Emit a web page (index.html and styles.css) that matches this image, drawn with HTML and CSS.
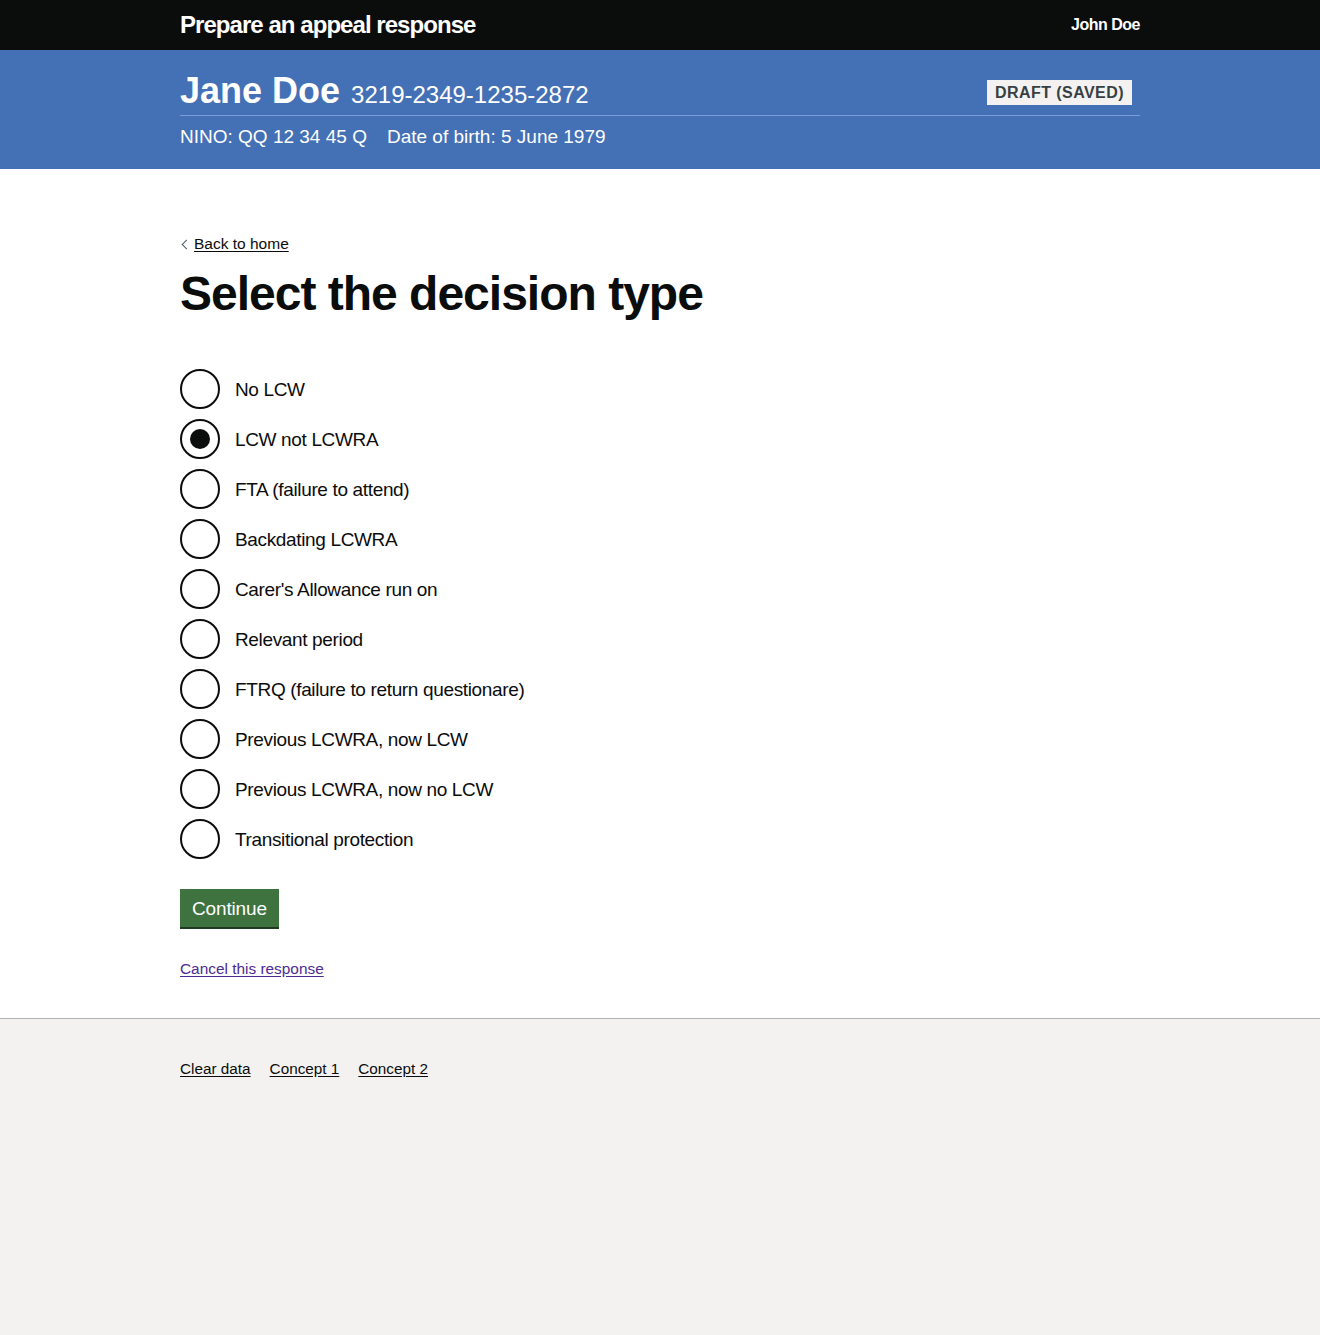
FILE: index.html
```html
<!DOCTYPE html>
<html lang="en">
<head>
<meta charset="utf-8">
<title>Select the decision type</title>
<link rel="stylesheet" href="styles.css">
</head>
<body>
<header class="site-header">
  <div class="container header-inner">
    <span class="service-name">Prepare an appeal response</span>
    <span class="user-name">John Doe</span>
  </div>
</header>
<section class="banner">
  <div class="container">
    <div class="banner-top">
      <div class="claimant"><span class="claimant-name">Jane Doe</span> <span class="claim-ref">3219-2349-1235-2872</span></div>
      <strong class="tag">DRAFT (SAVED)</strong>
    </div>
    <div class="banner-meta">
      <span>NINO: QQ 12 34 45 Q</span>
      <span>Date of birth: 5 June 1979</span>
    </div>
  </div>
</section>
<main class="container main">
  <a class="back-link" href="#">Back to home</a>
  <h1 class="heading-xl">Select the decision type</h1>
  <form class="form">
    <div class="radios">
      <label class="radio"><input type="radio" name="type"><span class="radio-mark"></span><span class="radio-label">No LCW</span></label>
      <label class="radio"><input type="radio" name="type" checked><span class="radio-mark"></span><span class="radio-label">LCW not LCWRA</span></label>
      <label class="radio"><input type="radio" name="type"><span class="radio-mark"></span><span class="radio-label">FTA (failure to attend)</span></label>
      <label class="radio"><input type="radio" name="type"><span class="radio-mark"></span><span class="radio-label">Backdating LCWRA</span></label>
      <label class="radio"><input type="radio" name="type"><span class="radio-mark"></span><span class="radio-label">Carer's Allowance run on</span></label>
      <label class="radio"><input type="radio" name="type"><span class="radio-mark"></span><span class="radio-label">Relevant period</span></label>
      <label class="radio"><input type="radio" name="type"><span class="radio-mark"></span><span class="radio-label">FTRQ (failure to return questionare)</span></label>
      <label class="radio"><input type="radio" name="type"><span class="radio-mark"></span><span class="radio-label">Previous LCWRA, now LCW</span></label>
      <label class="radio"><input type="radio" name="type"><span class="radio-mark"></span><span class="radio-label">Previous LCWRA, now no LCW</span></label>
      <label class="radio"><input type="radio" name="type"><span class="radio-mark"></span><span class="radio-label">Transitional protection</span></label>
    </div>
    <button type="button" class="button">Continue</button>
  </form>
  <p class="cancel"><a href="#" class="visited-link">Cancel this response</a></p>
</main>
<footer class="footer">
  <div class="container footer-links">
    <a href="#">Clear data</a>
    <a href="#">Concept 1</a>
    <a href="#">Concept 2</a>
  </div>
</footer>
</body>
</html>
```
FILE: styles.css
```css
* { box-sizing: border-box; }
html, body { margin: 0; padding: 0; }
body {
  font-family: "Liberation Sans", Arial, sans-serif;
  color: #0b0c0c;
  background: #f3f2f1;
  min-height: 1335px;
}
.container { width: 960px; margin: 0 auto; }

.site-header { background: #0b0c0c; color: #fff; height: 50px; }
.header-inner { display: flex; justify-content: space-between; align-items: center; height: 50px; }
.service-name { font-weight: 700; font-size: 24px; letter-spacing: -0.95px; }
.user-name { font-weight: 700; font-size: 16px; letter-spacing: -0.5px; }

.banner { background: #4470b5; color: #fff; padding: 20px 0 21px; }
.banner-top {
  display: flex; justify-content: space-between; align-items: center;
  border-bottom: 1px solid #7b9bd6;
  padding-bottom: 3px; padding-right: 8px;
}
.claimant { font-size: 36px; line-height: 42px; height: 42px; }
.claimant-name { font-weight: 700; }
.claim-ref { font-size: 24px; line-height: 1; margin-left: 1px; }
.tag {
  background: #f3f2f1; color: #383f43;
  font-size: 16px; font-weight: 700; letter-spacing: 0.45px;
  padding: 3px 8px 2px; line-height: 20px;
  margin-top: 3px;
}
.banner-meta { display: flex; gap: 20px; font-size: 19px; line-height: 22px; padding-top: 10px; }

body > .main { width: 100%; background: #fff; padding: 65px calc((100% - 960px) / 2) 39px; border-bottom: 1px solid #b1b4b6; }

.back-link {
  display: inline-block; position: relative;
  font-size: 15.5px; line-height: 20px;
  color: #0b0c0c; padding-left: 14px;
  text-underline-offset: 2px;
}
.back-link::before {
  content: ""; position: absolute; left: 3px; top: 7px;
  width: 6px; height: 6px;
  border-left: 1px solid #505a5f; border-bottom: 1px solid #505a5f;
  transform: rotate(45deg);
}
.heading-xl {
  font-size: 48px; line-height: 50px; font-weight: 700;
  letter-spacing: -1px;
  margin: 15px 0 50px;
}
.form { margin: 0; }
.radios { display: flex; flex-direction: column; gap: 10px; margin-bottom: 30px; }
.radio { display: flex; align-items: center; min-height: 40px; cursor: pointer; }
.radio input { position: absolute; opacity: 0; width: 0; height: 0; margin: 0; }
.radio-mark {
  width: 40px; height: 40px; border: 2px solid #0b0c0c; border-radius: 50%;
  position: relative; flex: none;
}
.radio input:checked + .radio-mark::after {
  content: ""; position: absolute; left: 8px; top: 8px;
  width: 20px; height: 20px; border-radius: 50%; background: #0b0c0c;
}
.radio-label { font-size: 19px; padding: 2px 0 0 15px; letter-spacing: -0.35px; }

.button {
  font-family: inherit; font-size: 19px; line-height: 23px;
  color: #fff; background: #3e7340; border: 0;
  box-shadow: 0 2px 0 #1f3a20;
  padding: 8px 12px 7px; margin: 0 0 2px;
  letter-spacing: -0.15px;
}
.cancel { margin: 30px 0 0; font-size: 15.4px; line-height: 20px; }
.visited-link { color: #4c2c92; text-underline-offset: 2px; }

.footer { background: #f3f2f1; padding: 40px 0; }
.footer-links { display: flex; gap: 19px; font-size: 15.3px; line-height: 20px; }
.footer-links a { color: #0b0c0c; text-underline-offset: 2px; }
```
